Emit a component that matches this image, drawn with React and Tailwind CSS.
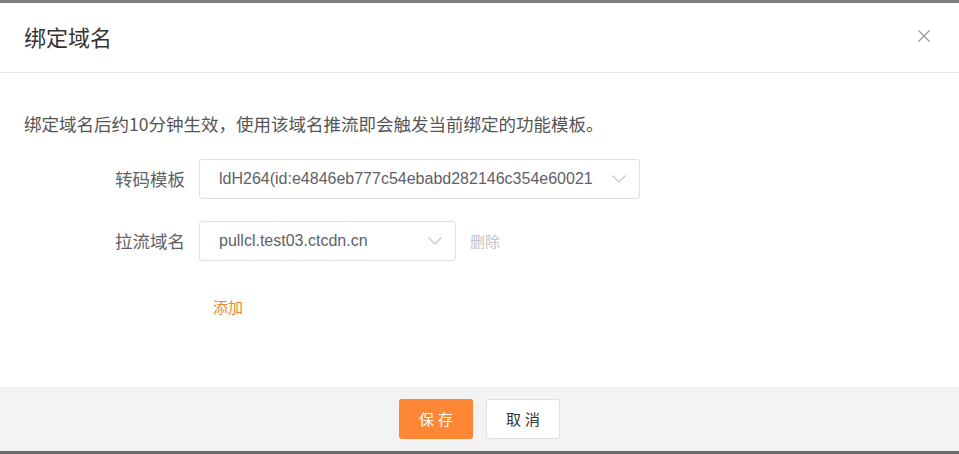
import React from "react";

const Chevron = () => (
  <svg width="14" height="8" viewBox="0 0 14 8" fill="none" className="shrink-0">
    <path d="M0.5 0.5L7 7L13.5 0.5" stroke="#c0c4cc" strokeWidth="1.1" />
  </svg>
);

const Select = ({ value, width }) => (
  <div
    className={`${width} h-[40px] flex items-center border border-[#dcdfe6] rounded-[3px] bg-white pl-[19px] pr-[13px]`}
  >
    <div className="flex-1 overflow-hidden whitespace-nowrap text-[16px] text-[#606266] font-['Liberation_Sans',Arial,sans-serif]">
      {value}
    </div>
    <div className="ml-[8px]">
      <Chevron />
    </div>
  </div>
);

export default function App() {
  return (
    <div className="w-full h-[454px] flex flex-col bg-white font-['Noto_Sans_CJK_SC','Microsoft_YaHei',sans-serif]">
      <div className="h-[3px] bg-[#7f7f7f]" />
      <div className="h-[70px] flex items-center justify-between border-b border-[#e6e6e6] pl-[24px] pr-[29px]">
        <div className="text-[22px] text-[#333] pb-[2px]">绑定域名</div>
        <svg width="12" height="12" viewBox="0 0 12 12" className="mb-[4px]">
          <path d="M0.5 0.5L11.5 11.5M11.5 0.5L0.5 11.5" stroke="#999" strokeWidth="1.2" />
        </svg>
      </div>
      <div className="flex-1 flex flex-col pt-[38px] px-[24px]">
        <div className="text-[17.5px] leading-[26px] text-[#555]">
          绑定域名后约10分钟生效，使用该域名推流即会触发当前绑定的功能模板。
        </div>
        <div className="flex items-center mt-[22px]">
          <div className="w-[175px] pr-[14px] text-right text-[17.5px] text-[#606266]">转码模板</div>
          <Select width="w-[441px]" value="ldH264(id:e4846eb777c54ebabd282146c354e60021" />
        </div>
        <div className="flex items-center mt-[22px]">
          <div className="w-[175px] pr-[14px] text-right text-[17.5px] text-[#606266]">拉流域名</div>
          <Select width="w-[257px]" value="pullcl.test03.ctcdn.cn" />
          <div className="ml-[14px] text-[15px] text-[#c0c4cc]">删除</div>
        </div>
        <div className="mt-[35px] pl-[189px] text-[15px] text-[#f5842f]">添加</div>
      </div>
      <div className="h-[64px] bg-[#f3f3f3] flex items-center justify-center gap-[13px]">
        <button className="w-[74px] h-[40px] rounded-[3px] bg-[#fd8734] text-white text-[15px] tracking-[4px] pl-[4px]">
          保存
        </button>
        <button className="w-[74px] h-[40px] rounded-[3px] bg-white border border-[#dcdfe6] text-[#333] text-[15px] tracking-[4px] pl-[4px]">
          取消
        </button>
      </div>
      <div className="h-[3px] bg-[#6b6b6b]" />
    </div>
  );
}
